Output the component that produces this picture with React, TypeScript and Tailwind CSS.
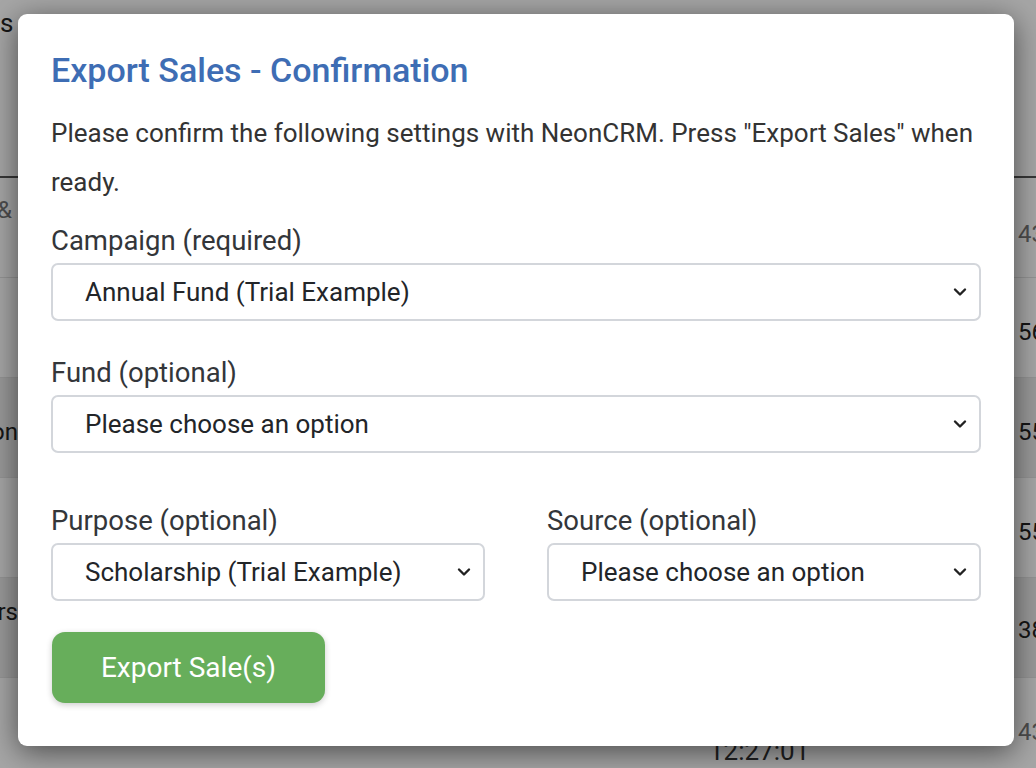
import React from 'react';

const Chevron: React.FC = () => (
  <svg width="14" height="9" viewBox="0 0 14 9" fill="none" className="pointer-events-none absolute right-[14px] top-1/2 -translate-y-1/2">
    <path d="M2 2l5 5 5-5" stroke="#222" strokeWidth="2.4" strokeLinecap="round" strokeLinejoin="round" />
  </svg>
);

const Select: React.FC<{ value: string }> = ({ value }) => (
  <div className="relative">
    <select
      defaultValue={value}
      className="w-full h-[58px] appearance-none rounded-[7px] border-2 border-[#d3d6db] bg-white pl-[32px] pr-10 text-[26px] text-[#222529] outline-none"
    >
      <option>{value}</option>
    </select>
    <Chevron />
  </div>
);

const Field: React.FC<{ label: string; value: string }> = ({ label, value }) => (
  <div>
    <label className="block text-[27.5px] leading-[32px] text-[#33363a] mb-[6px]">{label}</label>
    <Select value={value} />
  </div>
);

const rows = [
  { left: '& Add', right: '43', dark: false, leftY: 'pt-[14px] justify-start', rightY: 'pt-[38px]', muted: true },
  { left: '', right: '56', dark: false, leftY: 'justify-end', rightY: 'pt-[36px]', muted: false },
  { left: 'on', right: '55', dark: true, leftY: 'pt-[36px] justify-end', rightY: 'pt-[36px]', muted: false },
  { left: '', right: '55', dark: false, leftY: 'justify-end', rightY: 'pt-[36px]', muted: false },
  { left: 'ers', right: '38', dark: true, leftY: 'pt-[16px] justify-end', rightY: 'pt-[34px]', muted: false },
  { left: '', right: '43', dark: false, leftY: 'justify-end', rightY: 'pt-[36px]', muted: true },
];

const App: React.FC = () => {
  return (
    <div className="relative h-[768px] w-[1036px] overflow-hidden bg-white font-['Roboto',sans-serif]">
      {/* page behind the dialog */}
      <div className="flex flex-col">
        <div className="h-[176px] px-0 pt-[4px] text-[26px] text-[#222]">s</div>
        <div className="h-[2px] bg-[#555]" />
        {rows.map((r, i) => (
          <div
            key={i}
            className={`relative flex h-[100px] justify-between border-b border-[#e3e3e3] text-[24px] ${r.dark ? 'bg-[#ececec]' : 'bg-white'}`}
          >
            <div className={`flex w-[18px] overflow-hidden whitespace-nowrap ${r.leftY} ${r.muted ? 'text-[#777]' : 'text-[#222]'}`}>
              <span className={i === 0 ? '-ml-[3px]' : ''}>{r.left}</span>
            </div>
            <div className={`w-[18px] overflow-hidden whitespace-nowrap ${r.rightY} ${r.muted ? 'text-[#777]' : 'text-[#222]'}`}>
              {r.right}
            </div>
            {i === 5 && (
              <span className="absolute left-[709px] top-[54px] text-[26px] text-[#333]">12:27:01</span>
            )}
          </div>
        ))}
      </div>

      {/* backdrop + dialog */}
      <div className="absolute inset-0 bg-black/35 pl-[18px] pt-[14px]">
        <div className="flex w-[996px] h-[732px] flex-col rounded-[9px] bg-white px-[33px] pt-[38px] shadow-[0_6px_30px_rgba(0,0,0,0.55)]">
          <h1 className="text-[34px] leading-[36px] font-medium text-[#3e6db4]">Export Sales - Confirmation</h1>
          <p className="mt-[21px] text-[26px] leading-[49px] text-[#333]">
            Please confirm the following settings with NeonCRM. Press "Export Sales" when ready.
          </p>
          <div className="mt-[18px]">
            <Field label="Campaign (required)" value="Annual Fund (Trial Example)" />
          </div>
          <div className="mt-[36px]">
            <Field label="Fund (optional)" value="Please choose an option" />
          </div>
          <div className="mt-[52px] grid grid-cols-2 gap-x-[62px]">
            <Field label="Purpose (optional)" value="Scholarship (Trial Example)" />
            <Field label="Source (optional)" value="Please choose an option" />
          </div>
          <div className="mt-[31px]">
            <button className="ml-px h-[71px] w-[273px] rounded-[13px] bg-[#67ae5b] text-[28px] text-white shadow-[0_2px_6px_rgba(0,0,0,0.2)]">
              Export Sale(s)
            </button>
          </div>
        </div>
      </div>
    </div>
  );
};

export default App;
